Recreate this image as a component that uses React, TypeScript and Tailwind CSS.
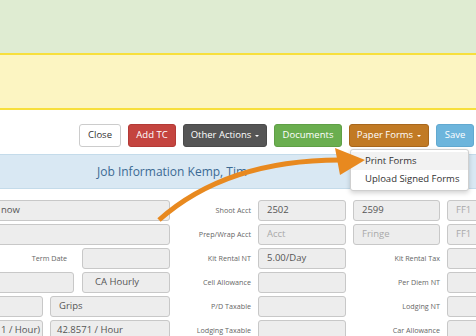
import React from "react";

function Btn({ label, cls, caret, w }: { label: string; cls: string; caret?: boolean; w: string }) {
  return (
    <div className={`h-[23px] ${w} rounded-[3px] border flex items-center justify-center text-[9.5px] ${cls}`}>
      <span>{label}</span>
      {caret && (
        <span className="ml-[4px] inline-block w-0 h-0 border-l-[2.5px] border-r-[2.5px] border-t-[2.5px] border-l-transparent border-r-transparent border-t-current" />
      )}
    </div>
  );
}

function Input({ v, ph, w, pl }: { v?: string; ph?: string; w?: string; pl?: string }) {
  return (
    <div
      className={`h-[21px] ${w ?? "w-full"} rounded-[3px] border border-[#c8c8c8] bg-[#ededed] text-[9.5px] flex items-center ${pl ?? "pl-[8px]"} whitespace-nowrap overflow-hidden ${
        v ? "text-[#555]" : "text-[#a9a9a9]"
      }`}
    >
      {v ?? ph ?? ""}
    </div>
  );
}

function Label({ t }: { t: string }) {
  return <div className="h-[21px] flex items-center justify-end text-[7.2px] text-[#666] whitespace-nowrap">{t}</div>;
}

export default function App() {
  return (
    <div className="relative w-[476px] h-[336px] overflow-hidden bg-white font-['Open_Sans',sans-serif]">
      <div className="h-[53px] bg-[#dfecd2]" />
      <div className="h-[57px] bg-[#fcf5c2] border-t-2 border-b-2 border-[#f7df3c]" />

      <div className="mt-[14px] flex justify-end gap-[7px] pr-[2px]">
        <Btn label="Close" w="w-[42px]" cls="bg-white border-[#cccccc] text-[#333]" />
        <Btn label="Add TC" w="w-[48px]" cls="bg-[#c4443f] border-[#b33a36] text-white" />
        <Btn label="Other Actions" caret w="w-[84px]" cls="bg-[#555555] border-[#4a4a4a] text-white" />
        <Btn label="Documents" w="w-[68px]" cls="bg-[#6aae4f] border-[#5f9f46] text-white" />
        <div className="relative">
          <Btn label="Paper Forms" caret w="w-[80px]" cls="bg-[#c17a24] border-[#a8671c] text-white" />
          <div className="absolute z-10 left-[1px] top-[25px] w-[119px] bg-white border border-[#cfcfcf] rounded-[3px] shadow-[0_2px_5px_rgba(0,0,0,0.18)] py-[2px] text-[9.5px] text-[#333]">
            <div className="h-[18px] flex items-center pl-[14px] bg-[#f2f2f2]">Print Forms</div>
            <div className="h-[18px] flex items-center pl-[14px]">Upload Signed Forms</div>
          </div>
        </div>
        <Btn label="Save" w="w-[38px]" cls="bg-[#6db5dc] border-[#62a9d0] text-white" />
      </div>

      <div className="mt-[7px] h-[35px] bg-[#d9e8f3] border-y border-[#c4dbea] flex items-center pl-[97px] text-[12px] text-[#3b6a94]">
        Job Information Kemp, Tim
      </div>

      <div className="mt-[11px] -ml-[8px] grid grid-cols-[178px_74px_88px_87px_60px] gap-x-[7px] gap-y-[3px]">
        {/* row 1 */}
        <Input v="now" pl="pl-[8px]" />
        <Label t="Shoot Acct" />
        <Input v="2502" />
        <Input v="2599" />
        <Input ph="FF1" />
        {/* row 2 */}
        <Input />
        <Label t="Prep/Wrap Acct" />
        <Input ph="Acct" />
        <Input ph="Fringe" />
        <Input ph="FF1" />
        {/* row 3 */}
        <div className="flex justify-end items-center gap-[15px]">
          <Label t="Term Date" />
          <Input w="w-[88px]" />
        </div>
        <Label t="Kit Rental NT" />
        <Input v="5.00/Day" />
        <Label t="Kit Rental Tax" />
        <Input />
        {/* row 4 */}
        <div className="flex gap-[8px]">
          <Input w="w-[82px]" />
          <Input v="CA Hourly" w="w-[88px]" pl="pl-[12px]" />
        </div>
        <Label t="Cell Allowance" />
        <Input />
        <Label t="Per Diem NT" />
        <Input />
        {/* row 5 */}
        <div className="flex gap-[7px]">
          <Input w="w-[51px]" />
          <Input v="Grips" w="w-[120px]" />
        </div>
        <Label t="P/D Taxable" />
        <Input />
        <Label t="Lodging NT" />
        <Input />
        {/* row 6 */}
        <div className="flex gap-[7px]">
          <Input v="1 / Hour)" w="w-[51px]" pl="pl-[8px]" />
          <Input v="42.8571 / Hour" w="w-[120px]" pl="pl-[6px]" />
        </div>
        <Label t="Lodging Taxable" />
        <Input />
        <Label t="Car Allowance" />
        <Input />
      </div>

      <svg className="absolute left-0 top-0 z-20 pointer-events-none" width="476" height="336" viewBox="0 0 476 336">
        <path d="M159 220 C 195 188, 250 160, 340 160" fill="none" stroke="#e8891f" strokeWidth="5" />
        <polygon points="335,148 365,160 340,175" fill="#e8891f" />
      </svg>
    </div>
  );
}
